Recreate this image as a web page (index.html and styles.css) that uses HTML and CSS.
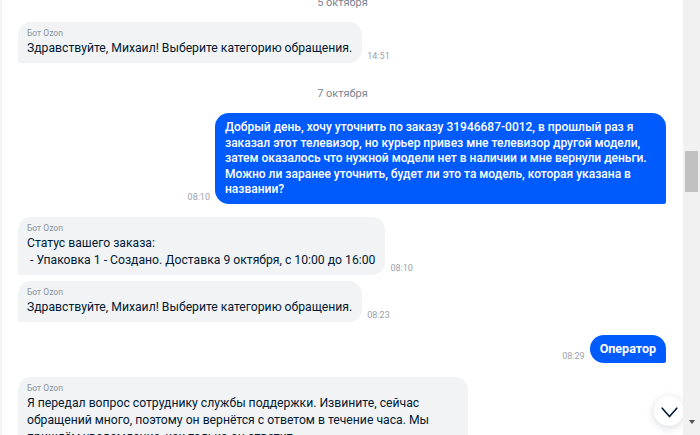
FILE: index.html
```html
<!DOCTYPE html>
<html lang="ru">
<head>
<meta charset="utf-8">
<title>Чат Ozon</title>
<link rel="stylesheet" href="styles.css">
</head>
<body>
<div class="app">
  <main class="chat">
    <div class="feed">
      <div class="day">5 октября</div>

      <div class="row in">
        <div class="bubble bot">
          <div class="sender">Бот Ozon</div>
          <div class="text">Здравствуйте, Михаил! Выберите категорию обращения.</div>
        </div>
        <span class="time">14:51</span>
      </div>

      <div class="day">7 октября</div>

      <div class="row out">
        <span class="time">08:10</span>
        <div class="bubble me">
          <div class="text">Добрый день, хочу уточнить по заказу 31946687-0012, в прошлый раз я заказал этот телевизор, но курьер привез мне телевизор другой модели, затем оказалось что нужной модели нет в наличии и мне вернули деньги. Можно ли заранее уточнить, будет ли это та модель, которая указана в названии?</div>
        </div>
      </div>

      <div class="row in">
        <div class="bubble bot">
          <div class="sender">Бот Ozon</div>
          <div class="text">Статус вашего заказа:<br>&nbsp;- Упаковка 1 - Создано. Доставка 9 октября, с 10:00 до 16:00</div>
        </div>
        <span class="time">08:10</span>
      </div>

      <div class="row in cont">
        <div class="bubble bot">
          <div class="sender">Бот Ozon</div>
          <div class="text">Здравствуйте, Михаил! Выберите категорию обращения.</div>
        </div>
        <span class="time">08:23</span>
      </div>

      <div class="row out">
        <span class="time">08:29</span>
        <div class="bubble me short">
          <div class="text strong">Оператор</div>
        </div>
      </div>

      <div class="row in last">
        <div class="bubble bot">
          <div class="sender">Бот Ozon</div>
          <div class="text">Я передал вопрос сотруднику службы поддержки. Извините, сейчас обращений много, поэтому он вернётся с ответом в течение часа. Мы пришлём уведомление, как только он ответит.</div>
        </div>
      </div>
    </div>

    <button class="to-bottom" type="button" aria-label="Вниз">
      <svg width="30" height="30" viewBox="0 0 30 30" aria-hidden="true">
        <polyline points="8.2,12.2 15.5,20.6 22.8,12.2" fill="none" stroke="#001a34" stroke-width="1.6" stroke-linecap="round" stroke-linejoin="round"/>
      </svg>
    </button>
  </main>

  <div class="scrollbar" aria-hidden="true">
    <div class="thumb"></div>
    <div class="arrow-down"></div>
  </div>
</div>
</body>
</html>
```
FILE: styles.css
```css
* { box-sizing: border-box; }

html, body {
  margin: 0;
  height: 100%;
  overflow: hidden;
  background: #ffffff;
}

body {
  font-family: Roboto, "Noto Sans", Arial, sans-serif;
  color: #001a34;
}

.app {
  display: flex;
  width: 700px;
  height: 435px;
}

.chat {
  position: relative;
  flex: 1;
  overflow: hidden;
  border-left: 2px solid #f3f3f4;
}

.feed {
  display: flex;
  flex-direction: column;
  margin-top: -28px;
}

.day {
  margin-top: 24px;
  text-align: center;
  font-size: 11px;
  line-height: 14px;
  color: #7b8591;
}

.row {
  display: flex;
  align-items: flex-end;
  gap: 5px;
  margin-top: 13px;
  padding: 0 17px 0 16px;
}

.day + .row { margin-top: 12px; }
.row.cont { margin-top: 6px; }
.row.last { margin-top: 14px; }

.row.out { justify-content: flex-end; }

.bubble {
  max-width: 450px;
  padding: 6px 10px 6px 9px;
}

.bubble.bot {
  background: #f2f3f5;
  border-radius: 13px 13px 13px 0;
}

.bubble.bot .text {
  padding-top: 1px;
}

.bubble.me {
  max-width: 451px;
  background: #005bff;
  color: #ffffff;
  border-radius: 14px 14px 2px 14px;
  padding: 7px 10px 6px 10px;
}

.bubble.me .text {
  font-size: 12px;
  font-weight: 500;
  line-height: 15.5px;
  letter-spacing: 0;
}

.bubble.me.short {
  padding: 6px 10px;
}

.bubble.me.short .text {
  line-height: 16px;
}

.sender {
  font-size: 8.5px;
  line-height: 11px;
  color: #8a939d;
}

.text {
  font-size: 12.2px;
  line-height: 17px;
}

.bubble.me .text.strong {
  font-size: 12.5px;
  font-weight: 700;
}

.time {
  flex: none;
  font-size: 9px;
  line-height: 11px;
  margin-bottom: 1px;
  color: #9aa2ab;
}

.to-bottom {
  position: absolute;
  right: -1px;
  bottom: 9px;
  width: 30px;
  height: 30px;
  padding: 0;
  border: 0;
  border-radius: 50%;
  background: #ffffff;
  box-shadow: 0 2px 8px rgba(0, 26, 52, 0.16);
  display: flex;
  align-items: center;
  justify-content: center;
}

.scrollbar {
  flex: none;
  width: 17px;
  background: #f1f1f1;
  display: flex;
  flex-direction: column;
  align-items: center;
  padding-top: 151px;
}

.thumb {
  width: 13px;
  height: 41px;
  background: #c1c1c1;
}

.arrow-down {
  margin-top: auto;
  margin-bottom: 11px;
  width: 0;
  height: 0;
  border-left: 3.5px solid transparent;
  border-right: 3.5px solid transparent;
  border-top: 4px solid #505050;
}
```
